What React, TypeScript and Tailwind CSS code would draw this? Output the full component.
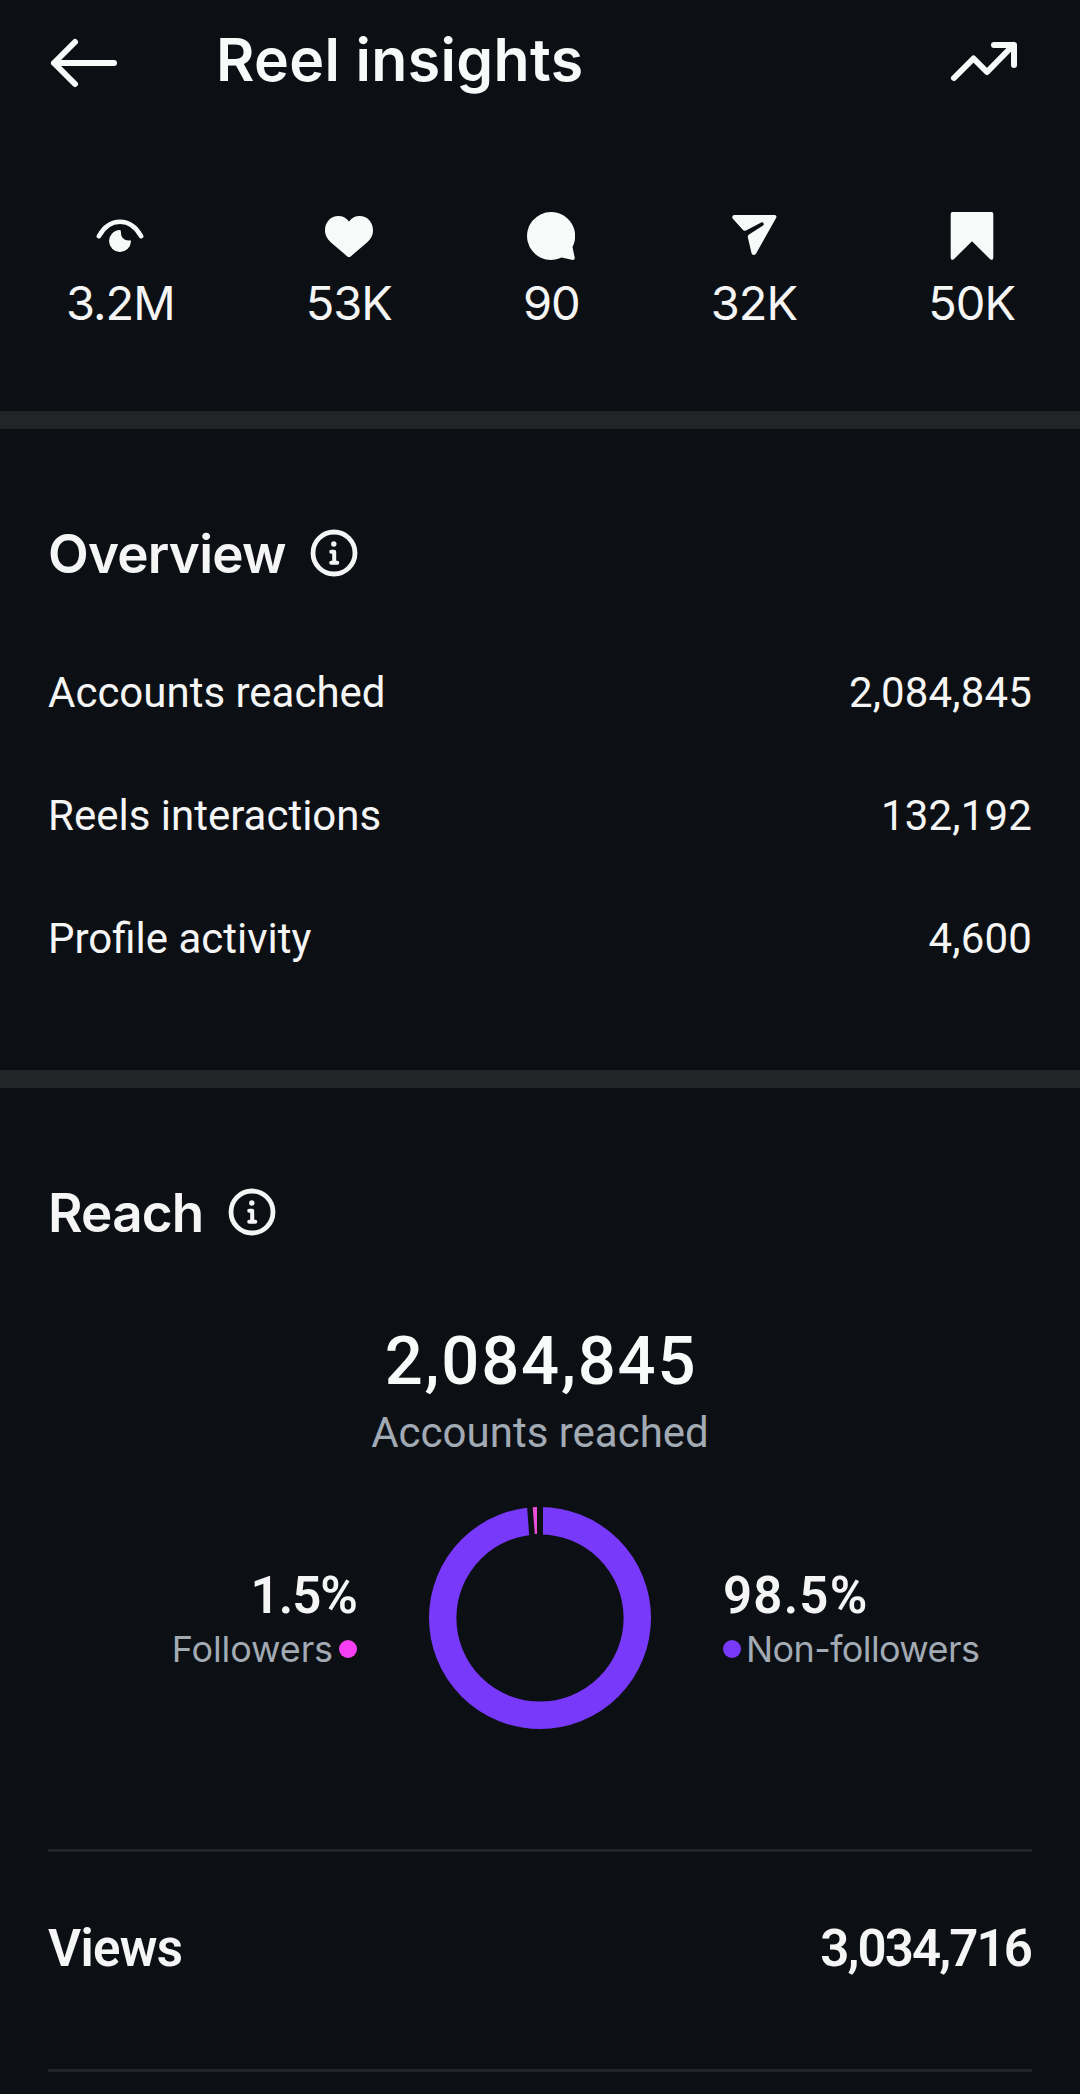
import type { ReactNode } from "react";

const stats = [
  { label: "3.2M", icon: <EyeIcon /> },
  { label: "53K", icon: <HeartIcon /> },
  { label: "90", icon: <CommentIcon /> },
  { label: "32K", icon: <ShareIcon /> },
  { label: "50K", icon: <BookmarkIcon /> },
];

const overview = [
  { label: "Accounts reached", value: "2,084,845" },
  { label: "Reels interactions", value: "132,192" },
  { label: "Profile activity", value: "4,600" },
];

function EyeIcon() {
  return (
    <svg viewBox="0 0 48 48" className="size-12" fill="none">
      <path
        d="M2.9 24.2C8 15 15.5 9.8 24 9.8s16 5.2 21.1 14.4"
        stroke="currentColor"
        strokeWidth="4.6"
        strokeLinecap="round"
      />
      <path
        d="M23.6 18A11 11 0 1 0 35 29.6Q35 28 33.4 28.4C28.5 28.7 24.8 25.4 25 20.4Q25.2 18 23.6 18Z"
        fill="currentColor"
      />
    </svg>
  );
}

function HeartIcon() {
  return (
    <svg viewBox="0 0 48 48" className="size-12" fill="currentColor">
      <path d="M24 9.4C21 5.8 17.6 4 13.4 4C5.8 4 0 10.2 0 18C0 23.4 2 26.8 6 30.4L22.3 44.4Q24 45.6 25.7 44.4L42 30.4C46 26.8 48 23.4 48 18C48 10.2 42.2 4 34.6 4C30.4 4 27 5.8 24 9.4Z" />
    </svg>
  );
}

function CommentIcon() {
  return (
    <svg viewBox="0 0 48 48" className="size-12" fill="currentColor">
      <path d="M24 0A24 24 0 1 0 34.7 45.5L45.8 48Q48 48 47.8 46L45.5 35A24 24 0 0 0 24 0Z" />
    </svg>
  );
}

function ShareIcon() {
  return (
    <svg viewBox="0 0 48 48" className="size-12" fill="currentColor">
      <path d="M4 3H44.6Q47.2 3.2 46.2 5.8L25.8 42Q23.4 44.4 21.6 41.5L17.8 25.2Q17.6 23.6 19 22.6L32.7 13.8A1.8 1.8 0 0 0 31.2 10.5L16 18.4Q14.2 19.2 12.8 17.8L2.6 6.4Q1.4 3.8 4 3Z" />
    </svg>
  );
}

function BookmarkIcon() {
  return (
    <svg viewBox="0 0 48 48" className="size-12" fill="currentColor">
      <path d="M4.5 0H43.5Q45.3 0 45.3 1.8V46Q44.8 48.8 42.4 47.4L24 29.3L5.6 47.4Q3.2 48.8 2.7 46V1.8Q2.7 0 4.5 0Z" />
    </svg>
  );
}

function InfoIcon() {
  return (
    <svg viewBox="0 0 48 48" className="mb-0.5 size-12" fill="none" stroke="currentColor">
      <circle cx="24" cy="24" r="21" strokeWidth="4.8" />
      <circle cx="23.8" cy="15" r="2.7" fill="currentColor" stroke="none" />
      <path
        d="M21.2 22.7H24.2V33.7M21.2 33.7H27.3"
        strokeWidth="4"
        strokeLinecap="round"
        strokeLinejoin="round"
      />
    </svg>
  );
}

function SectionTitle({ children }: { children: ReactNode }) {
  return (
    <div className="flex items-center gap-6">
      <h2 className="font-['Inter',sans-serif] text-[53px] leading-[60px] font-semibold tracking-[-0.8px]">
        {children}
      </h2>
      <InfoIcon />
    </div>
  );
}

// Reach split: 98.5% non-followers, with the followers sliver just left of the top
function ReachDonut() {
  return (
    <svg viewBox="0 0 222 222" className="h-[222px] w-[222px]">
      <circle cx="111" cy="111" r="97.3" fill="none" stroke="#7839fb" strokeWidth="27.4" />
      <path d="M98 -1H114V29H100.2Z" fill="#0c1014" />
      <path d="M103.7 0.3L108 0V27H105.8Z" fill="#e750d6" />
    </svg>
  );
}

export default function App() {
  return (
    <div className="min-h-[2094px] w-[1080px] overflow-hidden bg-[#0c1014] font-['Roboto',sans-serif] text-[#f5f5f5]">
      {/* Header */}
      <header className="flex pt-[30px] pr-[60px] pl-12 text-[#f8faf9]">
        <svg viewBox="0 0 72 60" className="h-[60px] w-[72px]" fill="none" stroke="currentColor" strokeWidth="6" strokeLinecap="round" strokeLinejoin="round">
          <path d="M66 33H6M27 12L6 33L27 54" />
        </svg>
        <h1 className="ml-24 font-['Inter',sans-serif] text-[59px] leading-[60px] font-semibold tracking-[0.35px]">
          Reel insights
        </h1>
        <svg viewBox="0 0 72 60" className="ml-auto h-[60px] w-[72px]" fill="none" stroke="currentColor" strokeWidth="6" strokeLinecap="round" strokeLinejoin="round">
          <path d="M6 48L25.5 28.5L39 42L65.5 15M46 15H66V35" />
        </svg>
      </header>

      {/* Stats */}
      <div className="mt-[122px] mb-20 flex justify-between pr-[65px] pl-[66px]">
        {stats.map((stat) => (
          <div key={stat.label} className="flex flex-col items-center text-[#f8faf9]">
            {stat.icon}
            <span className="mt-[15px] font-['Inter',sans-serif] text-[47px] leading-[56px] tracking-[-1px] text-[#f5f5f5]">
              {stat.label}
            </span>
          </div>
        ))}
      </div>

      <div className="h-[18px] bg-[#232428]" />

      {/* Overview */}
      <section className="px-12 pt-[95px] pb-[70px]">
        <SectionTitle>Overview</SectionTitle>
        <div className="mt-[47px]">
          {overview.map((row) => (
            <div key={row.label} className="flex h-[123px] items-center justify-between text-[42px]">
              <span>{row.label}</span>
              <span className="tracking-[0.15px]">{row.value}</span>
            </div>
          ))}
        </div>
      </section>

      <div className="h-[18px] bg-[#232428]" />

      {/* Reach */}
      <section className="pt-[95px]">
        <div className="px-12">
          <SectionTitle>Reach</SectionTitle>
        </div>
        <div className="mt-20 text-center">
          <p className="pl-0.5 text-[67px] leading-[76px] font-medium tracking-[1.8px] text-[#f9fbfa]">2,084,845</p>
          <p className="mt-[9px] text-[42px] leading-[50px] text-[#a2aab4]">Accounts reached</p>
        </div>
        <div className="mt-[49px] grid grid-cols-[1fr_222px_1fr] gap-[72px]">
          <div className="flex flex-col items-end pt-[61px]">
            <p className="text-[51px] leading-[56px] font-semibold tracking-[-1px]">1.5%</p>
            <p className="flex items-center gap-1.5 font-['Inter',sans-serif] text-[36px] leading-[50px] tracking-[-0.1px] text-[#a2aab4]">
              Followers
              <span className="size-[18px] rounded-full bg-[#f63ff1]" />
            </p>
          </div>
          <ReachDonut />
          <div className="flex flex-col items-start pt-[61px]">
            <p className="text-[51px] leading-[56px] font-semibold tracking-[1.2px]">98.5%</p>
            <p className="flex items-center gap-[5px] font-['Inter',sans-serif] text-[36px] leading-[50px] tracking-[-0.6px] text-[#a2aab4]">
              <span className="size-[18px] rounded-full bg-[#7839fb]" />
              Non-followers
            </p>
          </div>
        </div>
      </section>

      {/* Views */}
      <section className="mx-12 mt-[120px] h-[223px] border-y-[3px] border-[#232428] pt-[67px]">
        <div className="flex justify-between text-[51px] leading-[60px] font-semibold">
          <span className="tracking-[-0.7px]">Views</span>
          <span className="mr-px tracking-[-1.9px]">3,034,716</span>
        </div>
      </section>
    </div>
  );
}
